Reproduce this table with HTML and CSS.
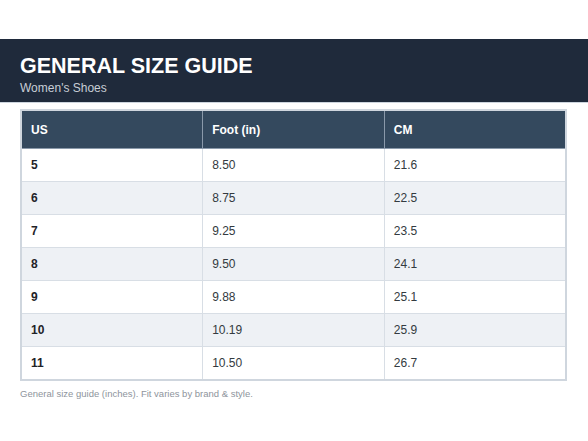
FILE: index.html
```html
<!DOCTYPE html>
<html>
<head>
<meta charset="utf-8">
<link rel="stylesheet" href="styles.css">
</head>
<body>
<div class="page">
  <header class="banner">
    <h1 class="title">GENERAL SIZE GUIDE</h1>
    <div class="subtitle">Women's Shoes</div>
  </header>
  <main class="content">
    <table class="sizes">
      <thead>
        <tr><th>US</th><th>Foot (in)</th><th>CM</th></tr>
      </thead>
      <tbody>
        <tr><td class="us">5</td><td>8.50</td><td>21.6</td></tr>
        <tr><td class="us">6</td><td>8.75</td><td>22.5</td></tr>
        <tr><td class="us">7</td><td>9.25</td><td>23.5</td></tr>
        <tr><td class="us">8</td><td>9.50</td><td>24.1</td></tr>
        <tr><td class="us">9</td><td>9.88</td><td>25.1</td></tr>
        <tr><td class="us">10</td><td>10.19</td><td>25.9</td></tr>
        <tr><td class="us">11</td><td>10.50</td><td>26.7</td></tr>
      </tbody>
    </table>
    <p class="note">General size guide (inches). Fit varies by brand &amp; style.</p>
  </main>
</div>
</body>
</html>
```
FILE: styles.css
```css
html, body {
  margin: 0;
  padding: 0;
  background: #ffffff;
  font-family: "Liberation Sans", Arial, sans-serif;
}
.page {
  padding-top: 39px;
}
.banner {
  background: #1f2a3b;
  height: 64px;
  box-sizing: border-box;
  padding: 14px 20px 0 20px;
  border-bottom: 1px solid #cdd5de;
}
.title {
  margin: 0;
  color: #ffffff;
  font-size: 21.5px;
  font-weight: bold;
  line-height: 26px;
}
.subtitle {
  color: #c8ced6;
  font-size: 12px;
  line-height: 16px;
  margin-top: 1px;
}
.content {
  padding: 6px 20px 0 20px;
}
.sizes {
  width: 547px;
  border-collapse: collapse;
  border: 2px solid #cfd6de;
  table-layout: fixed;
  font-size: 12px;
}
.sizes th {
  background: #34495e;
  color: #ffffff;
  font-weight: bold;
  text-align: left;
  height: 37px;
  padding: 0 9px;
  border: 1px solid #8a99aa;
  border-top: none;
}
.sizes td {
  height: 32px;
  padding: 0 9px;
  border: 1px solid #d8dee5;
  color: #333a40;
}
.sizes td.us {
  font-weight: bold;
  color: #1f2328;
}
.sizes tbody tr:nth-child(even) td {
  background: #eef1f5;
}
.note {
  margin: 7px 0 0 0;
  font-size: 9.5px;
  color: #8e949c;
}
```
